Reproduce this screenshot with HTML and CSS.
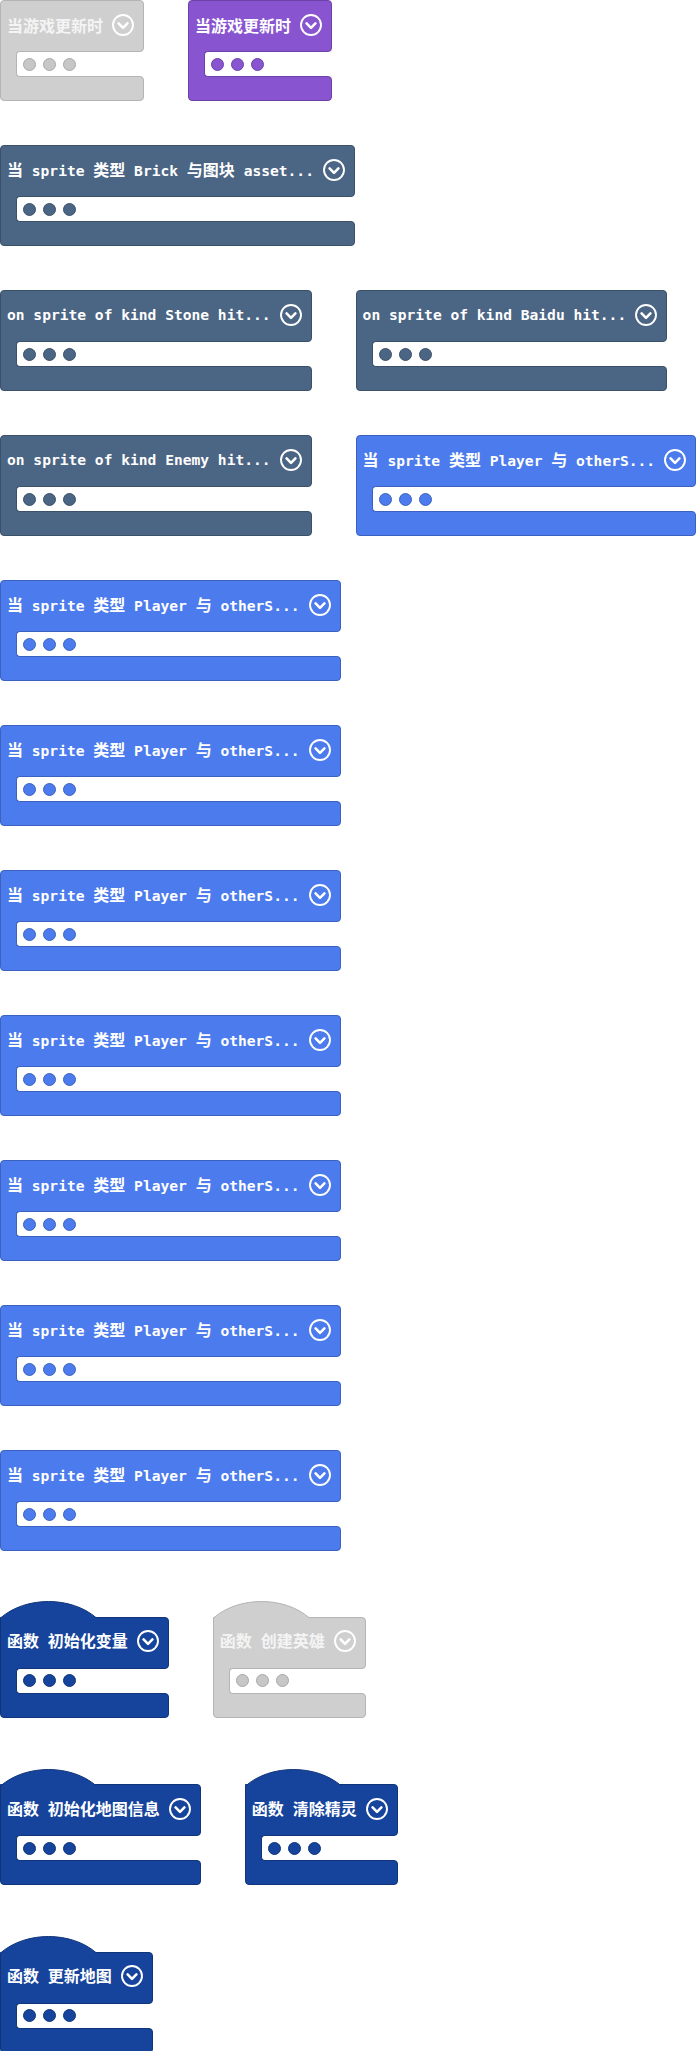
FILE: index.html
```html
<!DOCTYPE html>
<html lang="zh">
<head>
<meta charset="utf-8">
<title>Blocks</title>
<link rel="stylesheet" href="styles.css">
</head>
<body>
<div class="canvas">

  <div class="row">
    <div class="block grey">
      <div class="head"><span class="label">当游戏更新时</span><svg class="chev" viewBox="0 0 22 22"><circle cx="11" cy="11" r="10"/><path d="M6.6 9.4 L11 13.8 L15.4 9.4"/></svg></div>
      <div class="mid"><div class="slot"><i></i><i></i><i></i></div></div>
      <div class="foot"></div>
    </div>
    <div class="block purple">
      <div class="head"><span class="label">当游戏更新时</span><svg class="chev" viewBox="0 0 22 22"><circle cx="11" cy="11" r="10"/><path d="M6.6 9.4 L11 13.8 L15.4 9.4"/></svg></div>
      <div class="mid"><div class="slot"><i></i><i></i><i></i></div></div>
      <div class="foot"></div>
    </div>
  </div>

  <div class="row">
    <div class="block scene">
      <div class="head"><span class="label">当<span class="m"> sprite </span>类型<span class="m"> Brick </span>与图块<span class="m"> asset...</span></span><svg class="chev" viewBox="0 0 22 22"><circle cx="11" cy="11" r="10"/><path d="M6.6 9.4 L11 13.8 L15.4 9.4"/></svg></div>
      <div class="mid"><div class="slot"><i></i><i></i><i></i></div></div>
      <div class="foot"></div>
    </div>
  </div>

  <div class="row">
    <div class="block scene">
      <div class="head"><span class="label m">on sprite of kind Stone hit...</span><svg class="chev" viewBox="0 0 22 22"><circle cx="11" cy="11" r="10"/><path d="M6.6 9.4 L11 13.8 L15.4 9.4"/></svg></div>
      <div class="mid"><div class="slot"><i></i><i></i><i></i></div></div>
      <div class="foot"></div>
    </div>
    <div class="block scene">
      <div class="head"><span class="label m">on sprite of kind Baidu hit...</span><svg class="chev" viewBox="0 0 22 22"><circle cx="11" cy="11" r="10"/><path d="M6.6 9.4 L11 13.8 L15.4 9.4"/></svg></div>
      <div class="mid"><div class="slot"><i></i><i></i><i></i></div></div>
      <div class="foot"></div>
    </div>
  </div>

  <div class="row">
    <div class="block scene">
      <div class="head"><span class="label m">on sprite of kind Enemy hit...</span><svg class="chev" viewBox="0 0 22 22"><circle cx="11" cy="11" r="10"/><path d="M6.6 9.4 L11 13.8 L15.4 9.4"/></svg></div>
      <div class="mid"><div class="slot"><i></i><i></i><i></i></div></div>
      <div class="foot"></div>
    </div>
    <div class="block sprite">
      <div class="head"><span class="label">当<span class="m"> sprite </span>类型<span class="m"> Player </span>与<span class="m"> otherS...</span></span><svg class="chev" viewBox="0 0 22 22"><circle cx="11" cy="11" r="10"/><path d="M6.6 9.4 L11 13.8 L15.4 9.4"/></svg></div>
      <div class="mid"><div class="slot"><i></i><i></i><i></i></div></div>
      <div class="foot"></div>
    </div>
  </div>

  <div class="row">
    <div class="block sprite">
      <div class="head"><span class="label">当<span class="m"> sprite </span>类型<span class="m"> Player </span>与<span class="m"> otherS...</span></span><svg class="chev" viewBox="0 0 22 22"><circle cx="11" cy="11" r="10"/><path d="M6.6 9.4 L11 13.8 L15.4 9.4"/></svg></div>
      <div class="mid"><div class="slot"><i></i><i></i><i></i></div></div>
      <div class="foot"></div>
    </div>
  </div>

  <div class="row">
    <div class="block sprite">
      <div class="head"><span class="label">当<span class="m"> sprite </span>类型<span class="m"> Player </span>与<span class="m"> otherS...</span></span><svg class="chev" viewBox="0 0 22 22"><circle cx="11" cy="11" r="10"/><path d="M6.6 9.4 L11 13.8 L15.4 9.4"/></svg></div>
      <div class="mid"><div class="slot"><i></i><i></i><i></i></div></div>
      <div class="foot"></div>
    </div>
  </div>

  <div class="row">
    <div class="block sprite">
      <div class="head"><span class="label">当<span class="m"> sprite </span>类型<span class="m"> Player </span>与<span class="m"> otherS...</span></span><svg class="chev" viewBox="0 0 22 22"><circle cx="11" cy="11" r="10"/><path d="M6.6 9.4 L11 13.8 L15.4 9.4"/></svg></div>
      <div class="mid"><div class="slot"><i></i><i></i><i></i></div></div>
      <div class="foot"></div>
    </div>
  </div>

  <div class="row">
    <div class="block sprite">
      <div class="head"><span class="label">当<span class="m"> sprite </span>类型<span class="m"> Player </span>与<span class="m"> otherS...</span></span><svg class="chev" viewBox="0 0 22 22"><circle cx="11" cy="11" r="10"/><path d="M6.6 9.4 L11 13.8 L15.4 9.4"/></svg></div>
      <div class="mid"><div class="slot"><i></i><i></i><i></i></div></div>
      <div class="foot"></div>
    </div>
  </div>

  <div class="row">
    <div class="block sprite">
      <div class="head"><span class="label">当<span class="m"> sprite </span>类型<span class="m"> Player </span>与<span class="m"> otherS...</span></span><svg class="chev" viewBox="0 0 22 22"><circle cx="11" cy="11" r="10"/><path d="M6.6 9.4 L11 13.8 L15.4 9.4"/></svg></div>
      <div class="mid"><div class="slot"><i></i><i></i><i></i></div></div>
      <div class="foot"></div>
    </div>
  </div>

  <div class="row">
    <div class="block sprite">
      <div class="head"><span class="label">当<span class="m"> sprite </span>类型<span class="m"> Player </span>与<span class="m"> otherS...</span></span><svg class="chev" viewBox="0 0 22 22"><circle cx="11" cy="11" r="10"/><path d="M6.6 9.4 L11 13.8 L15.4 9.4"/></svg></div>
      <div class="mid"><div class="slot"><i></i><i></i><i></i></div></div>
      <div class="foot"></div>
    </div>
  </div>

  <div class="row">
    <div class="block sprite">
      <div class="head"><span class="label">当<span class="m"> sprite </span>类型<span class="m"> Player </span>与<span class="m"> otherS...</span></span><svg class="chev" viewBox="0 0 22 22"><circle cx="11" cy="11" r="10"/><path d="M6.6 9.4 L11 13.8 L15.4 9.4"/></svg></div>
      <div class="mid"><div class="slot"><i></i><i></i><i></i></div></div>
      <div class="foot"></div>
    </div>
  </div>

  <div class="row fnrow">
    <div class="block fn func">
      <svg class="hat" viewBox="0 0 97 18"><path d="M0.5 18 C25.5 -4 71.5 -4 96.5 18"/></svg>
      <div class="head"><span class="label">函数<span class="m"> </span>初始化变量</span><svg class="chev" viewBox="0 0 22 22"><circle cx="11" cy="11" r="10"/><path d="M6.6 9.4 L11 13.8 L15.4 9.4"/></svg></div>
      <div class="mid"><div class="slot"><i></i><i></i><i></i></div></div>
      <div class="foot"></div>
    </div>
    <div class="block fn grey">
      <svg class="hat" viewBox="0 0 97 18"><path d="M0.5 18 C25.5 -4 71.5 -4 96.5 18"/></svg>
      <div class="head"><span class="label">函数<span class="m"> </span>创建英雄</span><svg class="chev" viewBox="0 0 22 22"><circle cx="11" cy="11" r="10"/><path d="M6.6 9.4 L11 13.8 L15.4 9.4"/></svg></div>
      <div class="mid"><div class="slot"><i></i><i></i><i></i></div></div>
      <div class="foot"></div>
    </div>
  </div>

  <div class="row fnrow">
    <div class="block fn func">
      <svg class="hat" viewBox="0 0 97 18"><path d="M0.5 18 C25.5 -4 71.5 -4 96.5 18"/></svg>
      <div class="head"><span class="label">函数<span class="m"> </span>初始化地图信息</span><svg class="chev" viewBox="0 0 22 22"><circle cx="11" cy="11" r="10"/><path d="M6.6 9.4 L11 13.8 L15.4 9.4"/></svg></div>
      <div class="mid"><div class="slot"><i></i><i></i><i></i></div></div>
      <div class="foot"></div>
    </div>
    <div class="block fn func">
      <svg class="hat" viewBox="0 0 97 18"><path d="M0.5 18 C25.5 -4 71.5 -4 96.5 18"/></svg>
      <div class="head"><span class="label">函数<span class="m"> </span>清除精灵</span><svg class="chev" viewBox="0 0 22 22"><circle cx="11" cy="11" r="10"/><path d="M6.6 9.4 L11 13.8 L15.4 9.4"/></svg></div>
      <div class="mid"><div class="slot"><i></i><i></i><i></i></div></div>
      <div class="foot"></div>
    </div>
  </div>

  <div class="row fnrow">
    <div class="block fn func">
      <svg class="hat" viewBox="0 0 97 18"><path d="M0.5 18 C25.5 -4 71.5 -4 96.5 18"/></svg>
      <div class="head"><span class="label">函数<span class="m"> </span>更新地图</span><svg class="chev" viewBox="0 0 22 22"><circle cx="11" cy="11" r="10"/><path d="M6.6 9.4 L11 13.8 L15.4 9.4"/></svg></div>
      <div class="mid"><div class="slot"><i></i><i></i><i></i></div></div>
      <div class="foot"></div>
    </div>
  </div>

</div>
</body>
</html>
```

FILE: styles.css
```css
html, body {
  margin: 0;
  padding: 0;
  background: #ffffff;
}

.canvas {
  display: flex;
  flex-direction: column;
  gap: 44px;
  width: 697px;
  overflow: hidden;
}

.row {
  display: flex;
  align-items: flex-start;
  gap: 44px;
}

.row.fnrow {
  margin-top: 5px;
}

.row.fnrow + .row.fnrow {
  margin-top: 6px;
}

/* colour themes */
.grey   { --c: #cfcfcf; --d: #b4b4b4; --dot: #c7c7c7; --dotb: #a8a8a8; --t: #f4f4f4; }
.purple { --c: #8854d0; --d: #6c42a8; --dot: #8854d0; --dotb: #6c42a8; --t: #ffffff; }
.scene  { --c: #4b6584; --d: #3b5069; --dot: #4b6584; --dotb: #3b5069; --t: #ffffff; }
.sprite { --c: #4b7bec; --d: #3b62bf; --dot: #4b7bec; --dotb: #3b62bf; --t: #ffffff; }
.func   { --c: #16449c; --d: #10357b; --dot: #16449c; --dotb: #10357b; --t: #ffffff; }

.block {
  display: flex;
  flex-direction: column;
  flex: none;
}

.head {
  box-sizing: border-box;
  height: 52px;
  background: var(--c);
  border: 1px solid var(--d);
  border-radius: 4px 4px 4px 0;
  display: flex;
  align-items: center;
  gap: 9px;
  padding: 0 9px 3px 6px;
}

.fn .head {
  border-top-left-radius: 0;
}

.hat {
  display: block;
  width: 97px;
  height: 18px;
  margin-bottom: -1.5px;
  overflow: visible;
  z-index: 1;
}

.hat path {
  fill: var(--c);
  stroke: var(--d);
  stroke-width: 1;
}

.label {
  white-space: pre;
  color: var(--t);
  font-family: "Noto Sans CJK SC", "DejaVu Sans", sans-serif;
  font-weight: 700;
  font-size: 16px;
  line-height: 20px;
}

.m {
  font-family: "DejaVu Sans Mono", "Liberation Mono", "Noto Sans CJK SC", monospace;
  font-weight: 700;
  font-size: 14.6px;
}

.chev {
  width: 22px;
  height: 22px;
  flex: none;
  fill: none;
  stroke: #ffffff;
}

.chev circle {
  stroke-width: 1.9;
}

.chev path {
  stroke-width: 2.6;
  stroke-linecap: round;
  stroke-linejoin: round;
}

.mid {
  box-sizing: border-box;
  height: 26px;
  margin: -1px 0;
  display: flex;
  border-left: 1px solid var(--d);
  background: linear-gradient(90deg, var(--c) 0 24px, transparent 24px);
  z-index: 1;
}

.slot {
  flex: 1;
  box-sizing: border-box;
  margin-left: 15px;
  margin-right: 4px;
  background: #ffffff;
  border: 1px solid var(--d);
  border-right: 0;
  border-radius: 4px 0 0 4px;
  display: flex;
  align-items: center;
  gap: 7px;
  padding-left: 6px;
}

.slot i {
  display: block;
  box-sizing: border-box;
  width: 13px;
  height: 13px;
  border-radius: 50%;
  background: var(--dot);
  border: 1px solid var(--dotb);
}

.foot {
  box-sizing: border-box;
  height: 25px;
  background: var(--c);
  border: 1px solid var(--d);
  border-radius: 0 4px 4px 4px;
}
```
